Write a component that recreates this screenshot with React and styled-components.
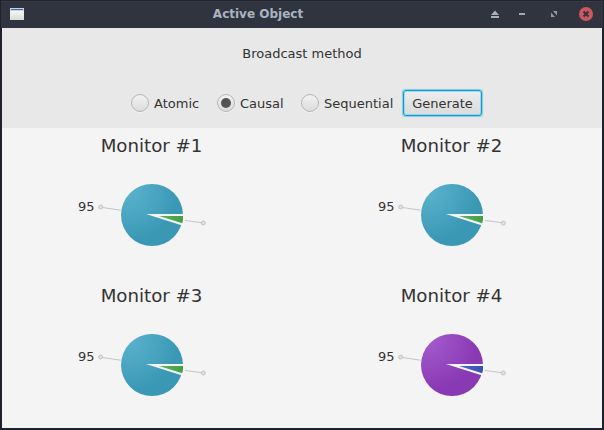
import React from "react";
import styled, { createGlobalStyle } from "styled-components";

const GlobalStyle = createGlobalStyle`
  *, *::before, *::after { box-sizing: border-box; }
  body { margin: 0; background: #1e212b; }
`;

const Window = styled.div`
  width: 604px;
  height: 430px;
  display: flex;
  flex-direction: column;
  background: #1f222c;
  padding: 0 2px 2px;
  font-family: "DejaVu Sans", sans-serif;
  font-size: 13px;
  color: #333333;
  overflow: hidden;
`;

const TitleBar = styled.header`
  display: grid;
  grid-template-columns: 120px 1fr 120px;
  align-items: center;
  flex: none;
  height: 28px;
  margin: 0 -1px;
  background: #2f343f;
  border-top: 1px solid #22252f;
  box-shadow: inset 0 1px #363b47;
`;

const AppIcon = styled.svg`
  display: block;
  margin: -1px 0 0 9px;
`;

const Title = styled.h1`
  margin: 0;
  padding: 0 88px 1px 0;
  text-align: center;
  font-size: 12px;
  line-height: 26px;
  font-weight: bold;
  color: #a9b3c2;
  white-space: nowrap;
`;

const Controls = styled.svg`
  display: block;
`;

const Toolbar = styled.section`
  flex: none;
  height: 100px;
  background: #e8e8e8;
`;

const Caption = styled.div`
  height: 50px;
  line-height: 51px;
  text-align: center;
`;

const Options = styled.div`
  display: flex;
  align-items: center;
  height: 50px;
  padding-left: 129px;
`;

const Option = styled.label`
  display: flex;
  align-items: center;
  flex: none;
  width: ${(p) => p.$width}px;
  gap: 5px;
  line-height: 20px;
  white-space: nowrap;
`;

const OptionText = styled.span`
  padding-top: 1px;
`;

const Radio = styled.span`
  display: grid;
  place-items: center;
  width: 18px;
  height: 18px;
  border-radius: 50%;
  border: 1px solid #b6b6b6;
  background: linear-gradient(#f2f2f2, #dcdcdc);
  box-shadow: 0 1px #f2f2f2;
  &::after {
    content: "";
    width: 10px;
    height: 10px;
    border-radius: 50%;
    background: ${(p) => (p.$checked ? "#555555" : "transparent")};
  }
`;

const Button = styled.button`
  flex: none;
  width: 79px;
  height: 26px;
  padding: 1px 0 0;
  border: 1px solid #039ed3;
  border-radius: 3px;
  background: linear-gradient(#ededed, #dadada);
  box-shadow: 0 0 1px 0.5px #86cde6, inset 0 0 0 0.5px #70c5e4;
  font: inherit;
  color: inherit;
`;

const Monitors = styled.main`
  flex: 1;
  display: grid;
  grid-template: repeat(2, 150px) / repeat(2, 300px);
  background: #f4f4f4;
`;

const Monitor = styled.section`
  display: flex;
  flex-direction: column;
`;

const Heading = styled.h2`
  margin: 0;
  height: 36px;
  padding-right: 1px;
  line-height: 35px;
  text-align: center;
  font-size: 18.2px;
  font-weight: normal;
`;

const Chart = styled.div`
  display: flex;
  padding: 16px 0 0 76px;
`;

const Value = styled.span`
  width: 18px;
  height: 18px;
  line-height: 18px;
  margin-top: 18px;
`;

const Pie = styled.svg`
  display: block;
`;

const charts = [
  { id: 1, main: ["#57b0cb", "#3a98b5"], slice: ["#60b356", "#42a048"] },
  { id: 2, main: ["#57b0cb", "#3a98b5"], slice: ["#60b356", "#42a048"] },
  { id: 3, main: ["#57b0cb", "#3a98b5"], slice: ["#60b356", "#42a048"] },
  { id: 4, main: ["#a157cb", "#8939b3"], slice: ["#5666c9", "#3850b5"] },
];

function PieChart({ id, main, slice }) {
  return (
    <Pie width="112" height="70" viewBox="0 0 112 70">
      <defs>
        <radialGradient id={`main${id}`} gradientUnits="userSpaceOnUse" cx="33" cy="11" r="50">
          <stop offset="0.1" stopColor={main[0]} />
          <stop offset="1" stopColor={main[1]} />
        </radialGradient>
        <linearGradient id={`slice${id}`}>
          <stop offset="0" stopColor={slice[0]} />
          <stop offset="1" stopColor={slice[1]} />
        </linearGradient>
      </defs>
      <g fill="#e0e0e0" stroke="#c4c4c4">
        <path d="M5 27.3 L24.5 30.2 M88 40.3 L105 42.6" />
        <circle cx="4.7" cy="27" r="2" />
        <circle cx="107.3" cy="43" r="2" />
      </g>
      <circle cx="56" cy="35" r="31" fill={`url(#main${id})`} />
      <path d="M50 34 H89 V45 L85.5 45.2 Z" fill="#f4f4f4" />
      <path d="M63 36 L86.2 43.2 L87 40 V36 Z" fill={`url(#slice${id})`} />
    </Pie>
  );
}

export default function App() {
  return (
    <>
      <GlobalStyle />
      <Window>
        <TitleBar>
          <AppIcon width="14" height="12" viewBox="0 0 14 12">
            <defs>
              <linearGradient id="paper" x2="0" y2="1">
                <stop offset="0" stopColor="#ffffff" />
                <stop offset="1" stopColor="#dadbd6" />
              </linearGradient>
            </defs>
            <path d="M0 0H14V12H0Z" fill="url(#paper)" />
            <path d="M0 0H14V3H0Z" fill="#c3d5ea" />
            <path d="M1 1H13V2H1Z" fill="#446b9d" />
          </AppIcon>
          <Title>Active Object</Title>
          <Controls width="120" height="27" viewBox="483 1 120 27">
            <path d="M495 10.5L499 15H491Z M491 16H499V18H491Z" fill="#a9b0bd" />
            <path d="M519 13H525V15H519Z" fill="#a0a8b5" />
            <path d="M553 11H557V15.5Z M551 12.5V17H555Z" fill="#949ba8" />
            <circle cx="586" cy="14" r="7" fill="#cc575d" />
            <path d="M583.5 11.5L588.5 16.5M588.5 11.5L583.5 16.5" stroke="#2f343f" strokeWidth="2" />
          </Controls>
        </TitleBar>
        <Toolbar>
          <Caption>Broadcast method</Caption>
          <Options>
            <Option $width={86}><Radio /><OptionText>Atomic</OptionText></Option>
            <Option $width={84}><Radio $checked /><OptionText>Causal</OptionText></Option>
            <Option $width={102}><Radio /><OptionText>Sequential</OptionText></Option>
            <Button>Generate</Button>
          </Options>
        </Toolbar>
        <Monitors>
          {charts.map((chart) => (
            <Monitor key={chart.id}>
              <Heading>Monitor #{chart.id}</Heading>
              <Chart>
                <Value>95</Value>
                <PieChart {...chart} />
              </Chart>
            </Monitor>
          ))}
        </Monitors>
      </Window>
    </>
  );
}
